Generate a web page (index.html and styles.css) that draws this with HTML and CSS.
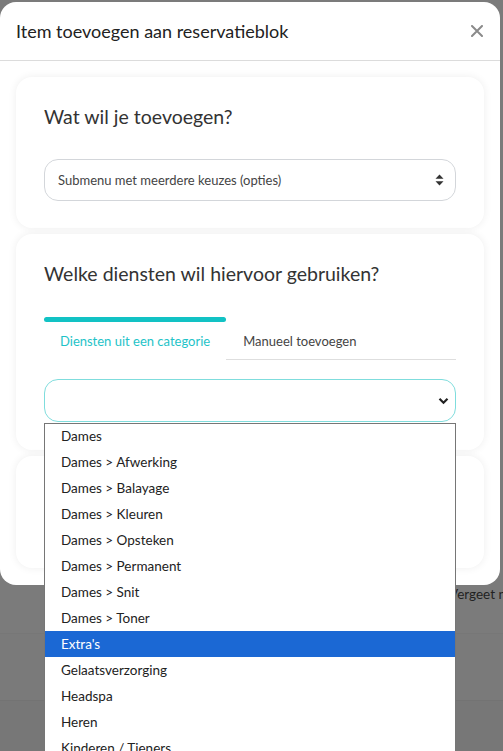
FILE: index.html
```html
<!DOCTYPE html>
<html lang="nl">
<head>
    <meta charset="UTF-8">
    <meta name="viewport" content="width=device-width, initial-scale=1.0">
    <title>Item toevoegen aan reservatieblok</title>
    <link rel="stylesheet" href="styles.css">
</head>
<body>

<div class="modal">
    <div class="modal-header">
        <h2>Item toevoegen aan reservatieblok</h2>
        <span class="close">
            <svg width="12" height="12" viewBox="0 0 12 12"><path d="M1 1L11 11M11 1L1 11" stroke="#8a8a8a" stroke-width="2" stroke-linecap="round"/></svg>
        </span>
    </div>

    <div class="modal-body">
        <div class="card">
            <h3>Wat wil je toevoegen?</h3>
            <div class="select">
                <span>Submenu met meerdere keuzes (opties)</span>
                <svg width="9" height="12" viewBox="0 0 9 12"><path d="M4.5 0.5L8.5 4.8H0.5Z M4.5 11.5L8.5 7.2H0.5Z" fill="#333"/></svg>
            </div>
        </div>

        <div class="card">
            <h3>Welke diensten wil hiervoor gebruiken?</h3>
            <div class="tabs">
                <div class="tab active">Diensten uit een categorie</div>
                <div class="tab">Manueel toevoegen</div>
            </div>
            <div class="select focus">
                <span></span>
                <svg width="11" height="8" viewBox="0 0 11 8"><path d="M1.5 1.8L5.5 5.8L9.5 1.8" stroke="#222" stroke-width="2.2" fill="none"/></svg>
            </div>
        </div>

        <div class="card card-empty"></div>
    </div>
</div>

<div class="page-band band-1"><span>Vergeet n</span></div>
<div class="page-band band-2"></div>
<div class="page-band band-3"></div>

<ul class="dropdown">
    <li>Dames</li>
    <li>Dames &gt; Afwerking</li>
    <li>Dames &gt; Balayage</li>
    <li>Dames &gt; Kleuren</li>
    <li>Dames &gt; Opsteken</li>
    <li>Dames &gt; Permanent</li>
    <li>Dames &gt; Snit</li>
    <li>Dames &gt; Toner</li>
    <li class="selected">Extra's</li>
    <li>Gelaatsverzorging</li>
    <li>Headspa</li>
    <li>Heren</li>
    <li>Kinderen / Tieners</li>
</ul>

</body>
</html>
```

FILE: styles.css
```css
* {
    box-sizing: border-box;
    margin: 0;
    padding: 0;
}
body {
    font-family: 'Lato', 'Open Sans', sans-serif;
    background: #7b7b7b;
    color: #333;
    width: 503px;
    height: 751px;
    overflow: hidden;
    position: relative;
}
.modal {
    width: 500px;
    margin-top: 2px;
    background: #fff;
    border-radius: 16px;
    overflow: hidden;
}
.modal-header {
    height: 59px;
    border-bottom: 1px solid #dcdcdc;
    display: flex;
    align-items: center;
    justify-content: space-between;
    padding: 0 17px 0 16px;
}
.modal-header h2 {
    font-size: 18px;
    font-weight: 400;
    color: #222;
    margin-top: -1px;
}
.close {
    display: flex;
    margin-top: -1px;
}
.modal-body {
    padding: 16px 16px 17px;
    display: flex;
    flex-direction: column;
    gap: 6px;
}
.card {
    background: #fff;
    border-radius: 16px;
    box-shadow: 0 0 8px rgba(0, 0, 0, 0.07);
    padding: 28px 28px 27px;
}
.card h3 {
    font-size: 19.5px;
    font-weight: 400;
    color: #333;
    line-height: 24px;
    margin-bottom: 30px;
}
.select {
    height: 42px;
    border: 1px solid #d3d6da;
    border-radius: 14px;
    display: flex;
    align-items: center;
    justify-content: space-between;
    padding: 0 11px 0 13px;
    font-size: 13px;
    color: #444;
}
.select.focus {
    height: 43px;
    border-color: #7fdddd;
    margin-top: 19px;
    padding-right: 6px;
}
.tabs {
    display: flex;
    margin-top: 31px;
}
.tab {
    height: 43px;
    padding: 5px 16px 0 17px;
    display: flex;
    align-items: center;
    font-size: 13px;
    color: #444;
    white-space: nowrap;
    border-bottom: 1px solid #dedede;
    flex: 1;
}
.tab.active {
    flex: 0 0 181px;
    border-bottom: none;
    color: #1ec3c8;
    padding-left: 16px;
    position: relative;
}
.tab.active::before {
    content: '';
    position: absolute;
    top: 0;
    left: 0;
    right: 0;
    height: 5px;
    border-radius: 3px;
    background: #12c2c4;
}
.card:nth-child(2) h3 {
    margin-bottom: 0;
}
.card:nth-child(2) {
    padding-bottom: 28px;
}
.card-empty {
    height: 112px;
}
.page-band {
    height: 48px;
    font-size: 13.5px;
    color: #222;
}
.band-1 {
    background: #7b7b7b;
    padding: 1px 0 0 449px;
    white-space: nowrap;
    overflow: hidden;
}
.band-2 {
    height: 67px;
    background: #7a7a7a;
    border-top: 1px solid #777;
}
.band-3 {
    height: 60px;
    background: #777;
    border-top: 1px solid #737373;
}
.dropdown {
    list-style: none;
    position: absolute;
    top: 423px;
    left: 44px;
    width: 412px;
    height: 328px;
    overflow: hidden;
    background: #fff;
    border: 1px solid #767676;
    border-bottom: none;
}
.dropdown li {
    height: 26px;
    line-height: 26px;
    padding-left: 16px;
    font-size: 13.5px;
    color: #222;
}
.dropdown li:first-child {
    height: 25px;
    line-height: 25px;
}
.dropdown li.selected {
    background: #1b68d4;
    color: #fff;
}
```
